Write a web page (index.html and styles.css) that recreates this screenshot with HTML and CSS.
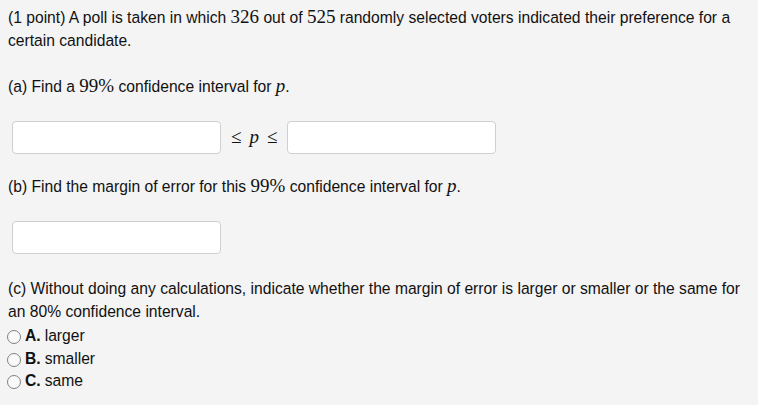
FILE: index.html
```html
<!DOCTYPE html>
<html>
<head>
<meta charset="utf-8">
<link rel="stylesheet" href="styles.css">
</head>
<body>
<div class="problem">
  <p class="para">(1 point) A poll is taken in which <span class="m">326</span> out of <span class="m">525</span> randomly selected voters indicated their preference for a certain candidate.</p>
  <p class="para gap">(a) Find a <span class="m">99%</span> confidence interval for <span class="mi">p</span>.</p>
  <div class="row">
    <span class="box"></span>
    <span class="rel"><span class="m">≤</span><span class="mi sp">p</span><span class="m">≤</span></span>
    <span class="box"></span>
  </div>
  <p class="para">(b) Find the margin of error for this <span class="m">99%</span> confidence interval for <span class="mi">p</span>.</p>
  <div class="row row2">
    <span class="box"></span>
  </div>
  <p class="para">(c) Without doing any calculations, indicate whether the margin of error is larger or smaller or the same for an 80% confidence interval.</p>
  <ul class="opts">
    <li><span class="radio"></span><b>A.</b> larger</li>
    <li><span class="radio"></span><b>B.</b> smaller</li>
    <li><span class="radio"></span><b>C.</b> same</li>
  </ul>
</div>
</body>
</html>
```
FILE: styles.css
```css
html, body {
  margin: 0;
  padding: 0;
  background: #f4f4f4;
}
body {
  font-family: "Liberation Sans", Arial, sans-serif;
  font-size: 15.65px;
  line-height: 23px;
  color: #111;
}
.problem {
  padding: 6px 8px 0 8px;
}
.para {
  margin: 0;
}
.gap {
  margin-top: 23px;
}
.m {
  font-family: "Liberation Serif", "Times New Roman", serif;
  font-size: 19px;
  line-height: 20px;
}
.mi {
  font-family: "Liberation Serif", "Times New Roman", serif;
  font-style: italic;
  font-size: 19px;
  line-height: 20px;
}
.sp {
  margin: 0 8px;
}
.row {
  display: flex;
  align-items: center;
  gap: 10px;
  padding: 0 4px;
  margin: 23px 0 21px;
}
.row2 {
  margin-bottom: 23px;
}
.box {
  display: block;
  width: 207px;
  height: 31px;
  background: #fff;
  border: 1px solid #cfcfcf;
  border-radius: 4px;
}
.rel {
  white-space: nowrap;
}
.opts {
  list-style: none;
  margin: 2px 0 0;
  padding: 0;
}
.opts li {
  display: flex;
  align-items: center;
  gap: 4px;
  line-height: 22.5px;
}
.radio {
  display: inline-block;
  width: 12px;
  height: 12px;
  border: 1px solid #808080;
  border-radius: 50%;
  background: #fafafa;
  margin-left: -1px;
  margin-top: 2px;
}
```
